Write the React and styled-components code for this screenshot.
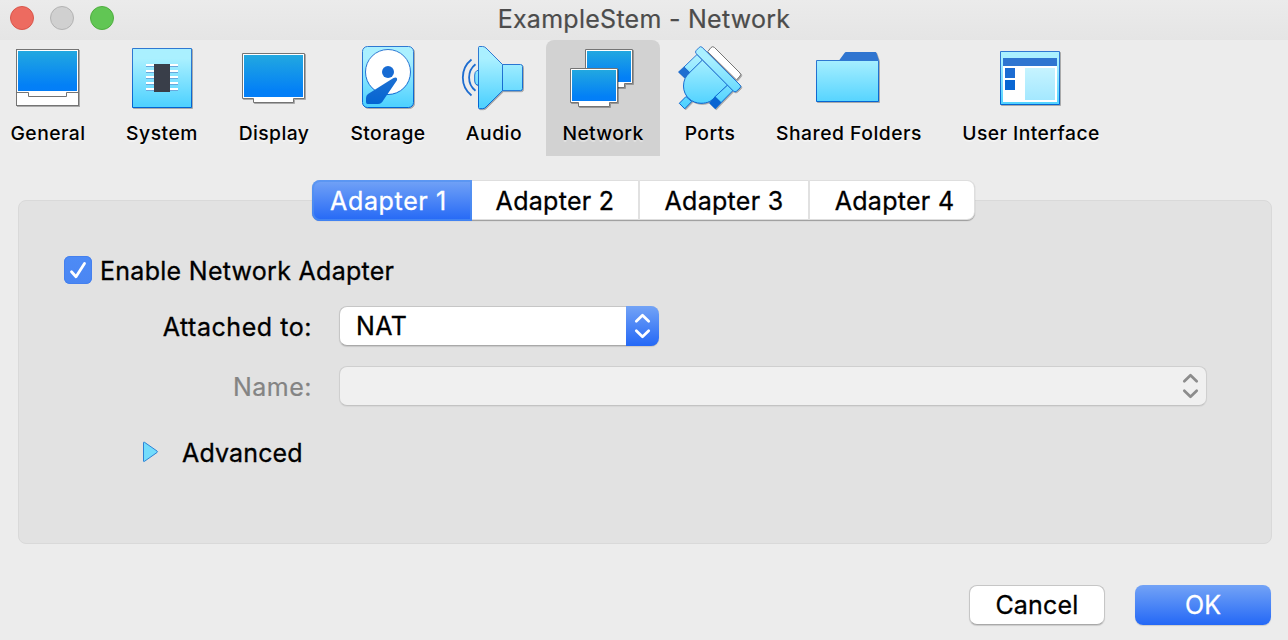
import React from "react";
import styled, { createGlobalStyle, css } from "styled-components";

const GlobalStyle = createGlobalStyle`
  * { box-sizing: border-box; }
  body { margin: 0; background: #ececec; font-family: Inter, "Liberation Sans", sans-serif; }
`;

const Window = styled.main`
  width: 1288px;
  height: 640px;
  overflow: hidden;
  display: flex;
  flex-direction: column;
  background: #ececec;
  color: #000;
  font-size: 25px;
  line-height: 40px;
`;

const Text = styled.span`
  white-space: nowrap;
  letter-spacing: ${(p) => p.$track || 0}px;
  padding-top: ${(p) => p.$drop || 0}px;
  -webkit-text-stroke: ${(p) => p.$heft || 0}px currentColor;
`;

const TitleBar = styled.header`
  height: 40px;
  flex: none;
  display: grid;
  grid-template-columns: 180px 1fr 180px;
  align-items: center;
  padding: 0 10px;
  background: linear-gradient(#ebebeb, #e5e5e5);
`;

const Lights = styled.div`
  display: flex;
  gap: 16px;
  margin-top: -4px;
`;

const Light = styled.span`
  width: 24px;
  height: 24px;
  border-radius: 50%;
  background: ${(p) => p.$fill};
  border: 1px solid ${(p) => p.$edge};
`;

const Title = styled.h1`
  margin: 0;
  font-size: 25px;
  font-weight: 400;
  line-height: 38px;
  padding-bottom: 2px;
  text-align: center;
  color: #4c4c4c;
`;

const Toolbar = styled.nav`
  height: 116px;
  flex: none;
  display: flex;
  gap: 8px;
  margin-left: -6px;
`;

const Tool = styled.button`
  width: ${(p) => p.$width}px;
  height: 116px;
  flex: none;
  display: flex;
  flex-direction: column;
  align-items: center;
  padding: 6px 0 0;
  border: 0;
  border-radius: 8px 8px 0 0;
  background: ${(p) => (p.$active ? "#d2d2d2" : "transparent")};
  font: 500 19.3px/24px Inter, sans-serif;
  color: #000;
  text-shadow: 0 2px 1px rgba(255, 255, 255, 0.4);
  svg { flex: none; margin-bottom: 11px; overflow: visible; }
`;

const Content = styled.section`
  display: flex;
  flex-direction: column;
  align-items: center;
  padding: 24px 16px 0 18px;
`;

const Tabs = styled.div`
  position: relative;
  display: flex;
  height: 40px;
  width: 663px;
  margin-right: 3px;
  border-radius: 8px;
  background: #fff;
  box-shadow: 0 0 0 1px rgba(0, 0, 0, 0.13) inset, 0 1px 1px rgba(0, 0, 0, 0.32);
`;

const Tab = styled.button`
  width: ${(p) => p.$width}px;
  height: 40px;
  padding: 2px 0 0 ${(p) => p.$indent || 0}px;
  border: 0;
  border-left: ${(p) => (p.$rule ? "2px solid #e1e1e1" : "0")};
  background: transparent;
  background-clip: padding-box;
  font: 400 25px/38px Inter, sans-serif;
  color: #000;
  ${(p) =>
    p.$active &&
    css`
      height: 41px;
      padding: 1px 7px 0 0;
      border-radius: 8px 0 0 8px;
      color: #fff;
      background: linear-gradient(#73a3f6, #2468f6);
      box-shadow: inset 0 0 0 2px rgba(80, 145, 240, 0.65);
    `}
`;

const Panel = styled.div`
  width: 1254px;
  height: 344px;
  margin-top: -20px;
  padding: 55px 0 0 45px;
  border: 1px solid #d9d9d9;
  border-radius: 8px;
  background: #e2e2e2;
`;

const CheckRow = styled.label`
  display: flex;
  align-items: center;
  height: 28px;
  gap: 8px;
`;

const CheckBox = styled.span`
  width: 28px;
  height: 28px;
  border-radius: 6px;
  background: linear-gradient(#4d8bf6, #4a86f3);
  box-shadow: inset 0 0 0 1px #4580ee;
  svg { display: block; }
`;

const Form = styled.div`
  display: grid;
  grid-template-columns: 248px 868px;
  column-gap: 27px;
  row-gap: 20px;
  margin-top: 22px;
`;

const FieldLabel = styled.span`
  height: 40px;
  padding-top: 1px;
  text-align: right;
  white-space: nowrap;
  color: ${(p) => (p.$disabled ? "#848484" : "#000")};
`;

const Select = styled.div`
  display: flex;
  justify-content: space-between;
  width: ${(p) => p.$width}px;
  height: 40px;
  padding-left: 16px;
  border-radius: 8px;
  background: ${(p) => (p.$disabled ? "#f0f0f0" : "#fff")};
  border: 1px solid ${(p) => (p.$disabled ? "#cfcfcf" : "#c6c6c6")};
  border-bottom-color: ${(p) => (p.$disabled ? "#c3c3c3" : "#a9a9a9")};
  border-right-width: ${(p) => (p.$disabled ? 1 : 0)}px;
  box-shadow: 0 1px 1px rgba(0, 0, 0, ${(p) => (p.$disabled ? 0.05 : 0.12)});
  line-height: 38px;
`;

const Stepper = styled.span`
  width: ${(p) => (p.$disabled ? 32 : 33)}px;
  height: 40px;
  margin-top: -1px;
  flex: none;
  border-radius: 0 8px 8px 0;
  background: ${(p) => (p.$disabled ? "transparent" : "linear-gradient(#73a3f6, #2468f6)")};
  svg { display: block; }
`;

const Disclosure = styled.div`
  display: flex;
  align-items: center;
  gap: 23px;
  height: 40px;
  margin: 26px 0 0 78px;
`;

const Footer = styled.footer`
  display: flex;
  justify-content: flex-end;
  gap: 30px;
  padding: 41px 17px 0 0;
`;

const Button = styled.button`
  width: 136px;
  height: 40px;
  padding: 0;
  border: 1px solid ${(p) => (p.$primary ? "transparent" : "#c6c6c6")};
  border-bottom-color: ${(p) => (p.$primary ? "transparent" : "#a9a9a9")};
  border-radius: 8px;
  font: 400 25px/38px Inter, sans-serif;
  color: ${(p) => (p.$primary ? "#fff" : "#000")};
  background: ${(p) => (p.$primary ? "linear-gradient(#73a3f6, #2468f6) border-box" : "#fff")};
  box-shadow: 0 1px 1px rgba(0, 0, 0, 0.14);
`;

const Icon = ({ children }) => (
  <svg width="64" height="64" viewBox="0 0 64 64" fill="none">{children}</svg>
);

const HiddenDefs = styled.svg`
  position: absolute;
`;

const Defs = () => (
  <HiddenDefs width="0" height="0">
    <defs>
      <linearGradient id="screen" x1="0" y1="0" x2="0" y2="1">
        <stop offset="0" stopColor="#22a8e0" />
        <stop offset=".85" stopColor="#0380f6" />
        <stop offset="1" stopColor="#037ef8" />
      </linearGradient>
      <linearGradient id="cyan" gradientUnits="userSpaceOnUse" x1="0" y1="0" x2="0" y2="62">
        <stop offset=".2" stopColor="#aaf0ff" />
        <stop offset=".95" stopColor="#50d2ff" />
      </linearGradient>
      <linearGradient id="edge" gradientUnits="userSpaceOnUse" x1="0" y1="0" x2="0" y2="62">
        <stop offset=".2" stopColor="#2f78d2" />
        <stop offset="1" stopColor="#0063d2" />
      </linearGradient>
      <filter id="drop" x="-10%" y="-10%" width="125%" height="125%" colorInterpolationFilters="sRGB">
        <feDropShadow dx="1" dy="1" stdDeviation="0" floodColor="#000" floodOpacity=".28" />
      </filter>
    </defs>
  </HiddenDefs>
);

const cyan = { fill: "url(#cyan)", stroke: "url(#edge)", strokeLinejoin: "round" };
const white = { fill: "#fff", stroke: "#747474" };

const GeneralIcon = () => (
  <Icon>
    <g filter="url(#drop)">
      <rect x=".5" y="3.5" width="62" height="56" {...white} />
      <rect x="2" y="5" width="59" height="40" fill="url(#screen)" />
      <path d="M0 46.5H12.5V50.5H50.5V46.5H63" stroke="#747474" />
    </g>
  </Icon>
);

const SystemIcon = () => (
  <Icon>
    <rect x="2.5" y="2.5" width="59" height="59" {...cyan} filter="url(#drop)" />
    {[18, 24, 30, 36, 42].map((y) => (
      <g key={y}>
        <rect x="16" y={y} width="32" height="2" fill="#fff" />
        <rect x="16" y={y + 2} width="32" height="1" fill="#69a8dc" />
      </g>
    ))}
    <rect x="24" y="18" width="16" height="28" fill="#393e49" />
  </Icon>
);

const DisplayIcon = () => (
  <Icon>
    <g filter="url(#drop)">
      <path d="M.5 7.5H62.5V52.5H51.5V56.5H11.5V52.5H.5Z" {...white} />
      <rect x="2" y="9" width="59" height="42" fill="url(#screen)" />
    </g>
  </Icon>
);

const StorageIcon = () => (
  <Icon>
    <rect x="6.5" y=".5" width="51" height="61" rx="5" {...cyan} filter="url(#drop)" />
    <circle cx="32" cy="26" r="22.5" fill="#fff" stroke="url(#edge)" />
    <circle cx="32" cy="26" r="6" fill="#176bd3" />
    <path d="M37.5 32Q41.8 30.6 41 34.3L27.5 54Q25.5 57.8 22 58H11.5Q10 58 10 56V52Q10 49.4 12 48Z" fill="url(#edge)" />
  </Icon>
);

const AudioIcon = () => (
  <Icon>
    <g filter="url(#drop)">
      <path d="M17 24.5H15Q12.7 26 12.7 29V35Q12.7 38 15 39H17Z" {...cyan} />
      <path d="M17.2.5H20.5Q22.5.5 24 2L40.5 18.5H58.5Q60.5 18.5 60.5 20.5V42.5Q60.5 44.7 58.5 44.7H40.5L24 61Q22.5 62.7 20.5 62.7H17.5Q16.5 62.7 16.5 61.5V1.5Q16.5.5 17.5.5Z" {...cyan} />
    </g>
    <path d="M40.5 18.5V44.7" stroke="url(#edge)" />
    <path d="M9.5 13.5A23 23 0 0 0 9.5 49.5M13.5 18.2A17 17 0 0 0 13.5 44.8" stroke="#1c6cd0" strokeWidth="1.8" />
  </Icon>
);

const NetworkIcon = () => (
  <Icon>
    <g filter="url(#drop)">
      <path d="M14.5 3.5H61.5V37.5H53.5V41.5H24V37.5H14.5Z" {...white} />
      <rect x="16" y="5" width="44" height="31" fill="url(#screen)" />
    </g>
    <g filter="url(#drop)">
      <path d="M-.5 22.5H46.5V56.5H38.5V60.5H7.5V56.5H-.5Z" {...white} />
      <rect x="1" y="24" width="44" height="31" fill="url(#screen)" />
    </g>
  </Icon>
);

const PortsIcon = () => (
  <Icon>
    <g filter="url(#drop)">
      <path d="M33 1.5Q34.8-.2 36.5 1.5L62 27Q63.5 28.5 62 30L58.5 34L29.7 5.7Z" {...white} />
      <path d="M8 50.5L1.3 57.3L6.7 62.8L13.7 55.6Z" {...cyan} />
      <path d="M24.3 14L11.5 26.5Q5.5 32 5.5 40C5.5 50.5 14 57.3 23 57.3C30 57.3 33.5 55 37 51L49.7 39Z" {...cyan} />
      <path d="M19 8.5L24.3 14L11.5 26.7L6 21Z" {...cyan} />
      <path d="M49.7 39L55 44.5L43 56.7L37 50.7Z" {...cyan} />
      <path d="M6 20.5L0 26L6.6 32.3L12.2 26.5Z" fill="#206fd0" />
      <path d="M37 50.5L31 57L37.3 63.3L43.5 56.7Z" fill="#0864d2" />
      <path d="M21.2 1.4Q22.7-.1 24.2 1.4L62 39Q63.5 40.5 62 42L58.5 45.2Q57 46.7 55.5 45.2L18.2 7.5Q16.7 6 18.2 4.5Z" {...cyan} />
    </g>
  </Icon>
);

const FolderIcon = () => (
  <Icon>
    <g filter="url(#drop)">
      <path d="M22 14.5L27.5 7Q28.2 6 29 6H58.5Q59.2 6 59.5 7L62 14.5Z" fill="#3075d0" />
      <rect x="-.5" y="14.5" width="62" height="41" {...cyan} />
    </g>
  </Icon>
);

const InterfaceIcon = () => (
  <Icon>
    <rect x="1.5" y="5.5" width="59" height="53" {...cyan} filter="url(#drop)" />
    <rect x="4" y="12" width="54" height="44" fill="#fff" />
    <rect x="4" y="12" width="54" height="8" fill="#2f75d0" />
    <rect x="6" y="22" width="10" height="10" fill="#1c6cd2" />
    <rect x="6" y="34" width="10" height="10" fill="#0866d3" />
    <rect x="26" y="22" width="30" height="32" fill="url(#cyan)" opacity=".55" />
  </Icon>
);

const Chevrons = ({ color }) => (
  <svg width="33" height="40" viewBox="0 0 33 40" fill="none">
    <path d="M10.3 15.3L16.5 9.2L22.7 15.3M10.3 24.7L16.5 30.8L22.7 24.7" stroke={color} strokeWidth="2.7" strokeLinecap="round" strokeLinejoin="round" />
  </svg>
);

const tools = [
  { label: "General", width: 108, icon: GeneralIcon, track: 0.45 },
  { label: "System", width: 104, icon: SystemIcon, track: 0.5 },
  { label: "Display", width: 104, icon: DisplayIcon, track: 0.4 },
  { label: "Storage", width: 108, icon: StorageIcon, track: 0.45 },
  { label: "Audio", width: 88, icon: AudioIcon, track: 0.55 },
  { label: "Network", width: 114, icon: NetworkIcon, track: 0.35, active: true },
  { label: "Ports", width: 84, icon: PortsIcon, track: 0.45 },
  { label: "Shared Folders", width: 178, icon: FolderIcon, track: 0.52 },
  { label: "User Interface", width: 170, icon: InterfaceIcon, track: 0.45 },
];

export default function App() {
  return (
    <Window>
      <GlobalStyle />
      <Defs />
      <TitleBar>
        <Lights>
          <Light $fill="#ed6b60" $edge="#d9564b" />
          <Light $fill="#d0d0d0" $edge="#b3b3b3" />
          <Light $fill="#61c654" $edge="#4fae3f" />
        </Lights>
        <Title><Text $track={0.27} $heft={0.2}>ExampleStem - Network</Text></Title>
      </TitleBar>
      <Toolbar>
        {tools.map(({ label, width, icon: Glyph, active, track }) => (
          <Tool key={label} $width={width} $active={active}>
            <Glyph />
            <Text $track={track}>{label}</Text>
          </Tool>
        ))}
      </Toolbar>
      <Content>
        <Tabs>
          <Tab $width={160} $active><Text $track={0.65} $heft={0.3}>Adapter 1</Text></Tab>
          <Tab $width={166}><Text $track={0.3} $heft={0.3}>Adapter 2</Text></Tab>
          <Tab $width={170} $rule><Text $track={0.3} $heft={0.3}>Adapter 3</Text></Tab>
          <Tab $width={167} $rule $indent={4}><Text $track={0.3} $heft={0.3}>Adapter 4</Text></Tab>
        </Tabs>
        <Panel>
          <CheckRow>
            <CheckBox>
              <svg width="28" height="28" viewBox="0 0 28 28" fill="none">
                <path d="M7.5 15.8L12 20.8L20.5 7.5" stroke="#fff" strokeWidth="2.8" strokeLinecap="round" strokeLinejoin="round" />
              </svg>
            </CheckBox>
            <Text $track={0.28} $heft={0.3} $drop={2}>Enable Network Adapter</Text>
          </CheckRow>
          <Form>
            <FieldLabel><Text $track={0.55} $heft={0.3}>Attached to:</Text></FieldLabel>
            <Select $width={320}>
              <Text $track={0.4} $heft={0.3}>NAT</Text>
              <Stepper><Chevrons color="#fff" /></Stepper>
            </Select>
            <FieldLabel $disabled><Text $track={0.5} $heft={0.2}>Name:</Text></FieldLabel>
            <Select $width={868} $disabled>
              <span />
              <Stepper $disabled><Chevrons color="#8c8c8c" /></Stepper>
            </Select>
          </Form>
          <Disclosure>
            <svg width="17" height="22" viewBox="0 0 17 22">
              <path d="M1.5 1.7Q1.5.7 2.5 1.3L15 10Q16 10.8 15 11.5L2.5 20.3Q1.5 21 1.5 20Z" fill="#73dcfc" stroke="#2c82d6" />
            </svg>
            <Text $track={0.15} $heft={0.3} $drop={1}>Advanced</Text>
          </Disclosure>
        </Panel>
      </Content>
      <Footer>
        <Button><Text $track={0.2} $heft={0.3}>Cancel</Text></Button>
        <Button $primary><Text $heft={0.3}>OK</Text></Button>
      </Footer>
    </Window>
  );
}
